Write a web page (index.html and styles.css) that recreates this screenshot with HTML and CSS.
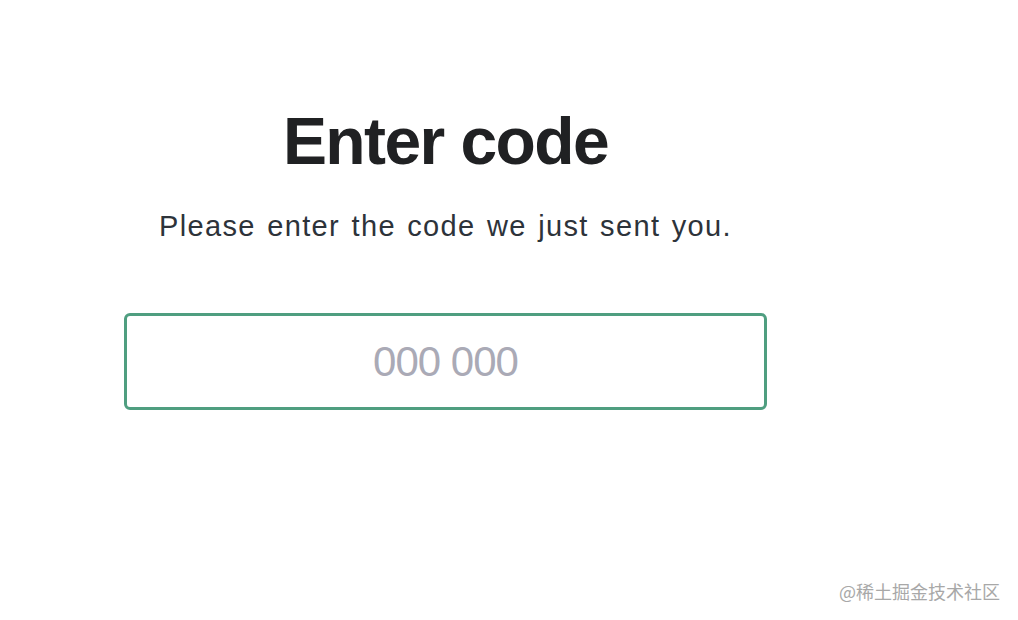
FILE: index.html
```html
<!DOCTYPE html>
<html lang="en">
<head>
<meta charset="utf-8">
<title>Enter code</title>
<link rel="stylesheet" href="styles.css">
</head>
<body>
<main class="page">
  <section class="card">
    <h1 class="title">Enter code</h1>
    <p class="subtitle">Please enter the code we just sent you.</p>
    <input class="code-input" type="text" placeholder="000 000">
  </section>
</main>
<div class="watermark">@稀土掘金技术社区</div>
</body>
</html>
```
FILE: styles.css
```css
html, body {
  margin: 0;
  padding: 0;
  background: #ffffff;
}
body {
  width: 1018px;
  height: 620px;
  position: relative;
  overflow: hidden;
  font-family: "Liberation Sans", Arial, sans-serif;
}
.page {
  padding-top: 101px;
  padding-left: 124px;
}
.card {
  width: 643px;
  display: flex;
  flex-direction: column;
  align-items: center;
}
.title {
  margin: 0;
  font-size: 66px;
  line-height: 80px;
  font-weight: 700;
  color: #202123;
  letter-spacing: -1.6px;
}
.subtitle {
  margin: 27px 0 0;
  font-size: 29px;
  line-height: 36px;
  color: #2d333a;
  letter-spacing: 1.35px;
  word-spacing: 2px;
}
.code-input {
  margin-top: 69px;
  box-sizing: border-box;
  width: 643px;
  height: 97px;
  border: 3px solid #4f9e80;
  border-radius: 6px;
  outline: none;
  background: #fff;
  text-align: center;
  font-family: "Liberation Sans", Arial, sans-serif;
  font-size: 42px;
  color: #2d333a;
  letter-spacing: -1px;
  padding: 0;
}
.code-input::placeholder {
  color: #aaaab6;
}
.watermark {
  position: absolute;
  right: 18px;
  top: 578px;
  font-family: "Noto Sans CJK SC", sans-serif;
  font-size: 18px;
  line-height: 26px;
  color: #a8a8a8;
}
```
